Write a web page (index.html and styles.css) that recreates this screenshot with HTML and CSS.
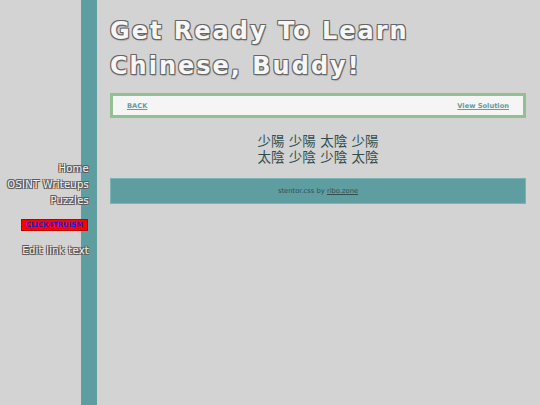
FILE: index.html
```html
<!DOCTYPE html>
<html lang="en">
<head>
<meta charset="utf-8">
<title>Get Ready To Learn Chinese, Buddy!</title>
<link rel="stylesheet" href="styles.css">
</head>
<body>
<div class="layout">
  <aside class="sidebar">
    <nav class="side-nav">
      <a class="side-link" href="#">Home</a>
      <a class="side-link" href="#">OSINT Writeups</a>
      <a class="side-link" href="#">Puzzles</a>
      <a class="badge" href="#">CLICK4TRUISM</a>
      <a class="side-link edit" href="#">Edit link text</a>
    </nav>
  </aside>
  <main class="main">
    <h1 class="title">Get Ready To Learn Chinese, Buddy!</h1>
    <div class="navbox">
      <a class="navlink" href="#">BACK</a>
      <a class="navlink" href="#">View Solution</a>
    </div>
    <div class="hexagram">
      <div class="hex-row">少陽 少陽 太陰 少陽</div>
      <div class="hex-row">太陰 少陰 少陰 太陰</div>
    </div>
    <footer class="footer">stentor.css by <a class="footer-link" href="#">ribo.zone</a></footer>
  </main>
</div>
</body>
</html>
```

FILE: styles.css
```css
html, body {
  margin: 0;
  padding: 0;
}
body {
  background: #d3d3d3;
  font-family: "DejaVu Sans", Verdana, sans-serif;
  color: #2f4f4f;
}
.layout {
  display: flex;
  min-height: 405px;
}
.sidebar {
  box-sizing: border-box;
  width: 97px;
  flex: none;
  border-right: 16px solid #5f9ea0;
  padding-top: 161px;
}
.side-nav {
  display: flex;
  flex-direction: column;
  align-items: flex-end;
  margin-right: -8px;
}
.side-link {
  font-size: 10px;
  line-height: 16px;
  letter-spacing: 0.25px;
  color: #f2f2f2;
  text-decoration: none;
  white-space: nowrap;
  text-shadow: -1px -1px 0 #5a5a5a, 1px -1px 0 #5a5a5a, -1px 1px 0 #5a5a5a, 1px 1px 0 #5a5a5a, 1px 1px 1px #aaa;
}
.side-link.edit {
  margin-top: 12px;
}
.badge {
  box-sizing: border-box;
  margin-top: 10px;
  margin-right: 1px;
  width: 67px;
  height: 12px;
  background: #ff0000;
  border: 1px solid #c00000;
  color: #2020d8;
  font-weight: bold;
  font-size: 6.9px;
  line-height: 10px;
  text-align: center;
  text-decoration: none;
  white-space: nowrap;
}
.main {
  width: 416px;
  margin-left: 13px;
}
.title {
  margin: 14px 0 0;
  font-size: 24px;
  line-height: 35px;
  letter-spacing: 2px;
  font-weight: bold;
  color: #f6f6f6;
  text-shadow: -1px -1px 0 #666, 1px -1px 0 #666, -1px 1px 0 #666, 1px 1px 0 #666, 1px 2px 1px #aaa;
}
.navbox {
  box-sizing: border-box;
  margin-top: 9px;
  height: 25px;
  border: 3px solid #93c093;
  background: #f5f5f5;
  display: flex;
  justify-content: space-between;
  align-items: center;
  padding: 0 14px;
}
.navlink {
  font-size: 6.7px;
  font-weight: bold;
  color: #5f9ea0;
  text-decoration: underline;
}
.hexagram {
  margin-top: 15px;
  text-align: center;
  font-family: "DejaVu Sans", "Noto Sans CJK TC", "Noto Sans CJK JP", sans-serif;
  font-size: 13.5px;
  color: #2f4f4f;
}
.hex-row {
  line-height: 16px;
  height: 16px;
}
.footer {
  box-sizing: border-box;
  margin-top: 13px;
  height: 26px;
  background: #5f9ea0;
  border: 1px solid #79b3b3;
  text-align: center;
  font-size: 6.75px;
  line-height: 24px;
  color: #2f4f4f;
}
.footer-link {
  color: #2f4f4f;
  text-decoration: underline;
}
```
